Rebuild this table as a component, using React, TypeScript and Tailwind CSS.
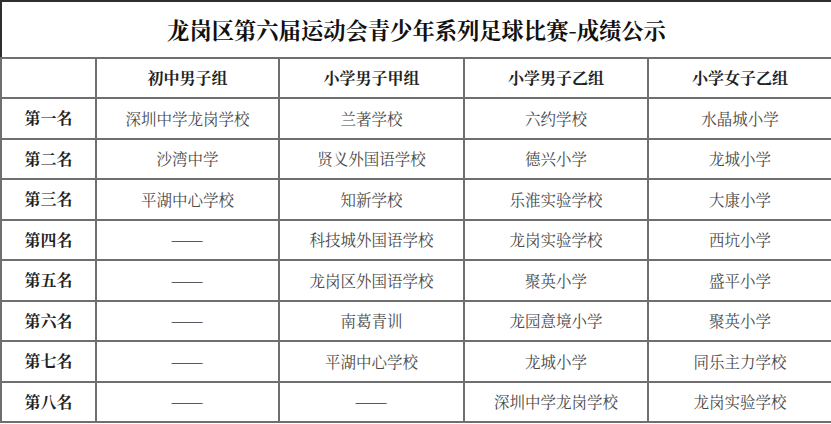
const columns = ["初中男子组", "小学男子甲组", "小学男子乙组", "小学女子乙组"];

const rows: [string, string[]][] = [
  ["第一名", ["深圳中学龙岗学校", "兰著学校", "六约学校", "水晶城小学"]],
  ["第二名", ["沙湾中学", "贤义外国语学校", "德兴小学", "龙城小学"]],
  ["第三名", ["平湖中心学校", "知新学校", "乐淮实验学校", "大康小学"]],
  ["第四名", ["——", "科技城外国语学校", "龙岗实验学校", "西坑小学"]],
  ["第五名", ["——", "龙岗区外国语学校", "聚英小学", "盛平小学"]],
  ["第六名", ["——", "南葛青训", "龙园意境小学", "聚英小学"]],
  ["第七名", ["——", "平湖中心学校", "龙城小学", "同乐主力学校"]],
  ["第八名", ["——", "——", "深圳中学龙岗学校", "龙岗实验学校"]],
];

const font = {
  fontFamily: '"Noto Serif CJK SC", "Noto Sans CJK SC", serif',
};

function Cell({ text }: { text: string }) {
  if (text === "——") {
    // the dash pair is a bit wider in the reference, stretch it
    return <span className="inline-block scale-x-[1.25] text-[#333]">——</span>;
  }
  return <>{text}</>;
}

export default function App() {
  return (
    <div className="w-[831px] h-[424px] bg-white" style={font}>
      <table className="w-[831px] table-fixed border-collapse border-2 border-[#2e2e2e] text-[#4a4a4a]">
        <colgroup>
          <col className="w-[95px]" />
          <col className="w-[183px]" />
          <col className="w-[185px]" />
          <col className="w-[184px]" />
          <col className="w-[184px]" />
        </colgroup>
        <thead>
          <tr className="h-[57px] border-b-2 border-[#3a3a3a]">
            <th colSpan={5} className="text-[22.3px] font-bold text-[#111]">
              龙岗区第六届运动会青少年系列足球比赛-成绩公示
            </th>
          </tr>
          <tr className="h-[40px]">
            <th className="border-2 border-[#6f6f6f]" />
            {columns.map((c) => (
              <th key={c} className="border-2 border-[#6f6f6f] text-[16px] font-bold text-[#222]">
                {c}
              </th>
            ))}
          </tr>
        </thead>
        <tbody>
          {rows.map(([rank, cells]) => (
            <tr key={rank} className="h-[40.5px]">
              <td className="border-2 border-[#6f6f6f] text-center text-[16px] font-bold text-[#222]">
                {rank}
              </td>
              {cells.map((c, i) => (
                <td key={i} className="border-2 border-[#6f6f6f] text-center text-[15.5px]">
                  <Cell text={c} />
                </td>
              ))}
            </tr>
          ))}
        </tbody>
      </table>
    </div>
  );
}
